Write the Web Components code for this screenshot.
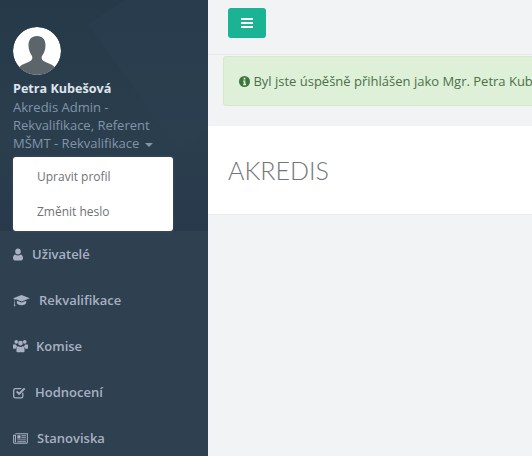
<!DOCTYPE html>
<html lang="cs">
<head>
<meta charset="utf-8">
<title>Akredis</title>
<style>
    html, body { margin: 0; height: 100%; overflow: hidden; }
    body { font-family: "Open Sans", "Liberation Sans", sans-serif; font-size: 13px; background: #f2f3f5; }
</style>
</head>
<body>
<app-shell>
    <side-bar slot="side">
        <nav-item label="Uživatelé" gap="32"><svg viewBox="0 0 11 13" width="10" height="13"><path fill="currentColor" d="M5.500 0C7.300 0 8.600 1.400 8.600 3.300S7.300 6.600 5.500 6.600 2.400 5.200 2.400 3.300 3.700 0 5.500 0zM2.600 6.500c.7.700 1.700 1.100 2.900 1.100s2.200-.4 2.900-1.100c1.800.2 2.600 1.900 2.600 4.200 0 1.400-.8 2.300-2 2.300H2c-1.200 0-2-.9-2-2.300 0-2.300.8-4 2.600-4.200z"/></svg></nav-item>
        <nav-item label="Rekvalifikace" gap="39"><svg viewBox="0 0 18 14" width="17" height="13"><path fill="currentColor" d="M9 1l9 3.500-9 3.500-6-2.300-1.200.6v2.500c.3.200.5.400.5.700l-.4.500.5 3.300H.8l.5-3.300-.4-.5c0-.3.2-.5.500-.7V5.400L0 4.500zM4 7.200l5 2 5-2v2.600c0 1.300-2.300 2.400-5 2.400s-5-1.100-5-2.400z"/></svg></nav-item>
        <nav-item label="Komise" gap="36"><svg viewBox="0 0 16 14" width="15" height="14"><path fill="currentColor" d="M3.500 0.500a2 2 0 1 1 0 4 2 2 0 0 1 0-4zM12.500 0.500a2 2 0 1 1 0 4 2 2 0 0 1 0-4zM8 1.500a2.500 2.500 0 1 1 0 5 2.500 2.500 0 0 1 0-5zM0 5.500h3.200c.3 1 .9 1.800 1.300 2.200-1 .5-1.500 1.300-1.600 2.300H1c-.6 0-1-.4-1-1zM12.800 5.500H16v3.500c0 .6-.4 1-1 1h-1.900c-.1-1-.6-1.800-1.600-2.300.4-.4 1-1.200 1.300-2.200zM5.500 7.200c.7.500 1.600.8 2.500.8s1.800-.3 2.500-.8c1.300.3 1.800 1.500 1.800 3.300v2c0 .7-.5 1.200-1.200 1.200H4.900c-.7 0-1.200-.5-1.200-1.200v-2c0-1.800.5-3 1.800-3.300z"/></svg></nav-item>
        <nav-item label="Hodnocení" gap="35"><svg viewBox="0 0 13 13" width="13" height="13"><path fill="none" stroke="currentColor" stroke-width="1.300" d="M9.800 6.800v3.400c0 1-.6 1.600-1.600 1.600H2.300c-1 0-1.600-.6-1.600-1.600V4.300c0-1 .6-1.600 1.600-1.600h6"/><path fill="currentColor" d="M3 6l1.300-1.300 1.800 1.800L11 1.700l1.400 1.400L6.100 9.300z"/></svg></nav-item>
        <nav-item label="Stanoviska" gap="37"><svg viewBox="0 0 16 12" width="15" height="11"><path fill="none" stroke="currentColor" stroke-width="1.100" d="M2.500.800h13v9.300c0 .7-.4 1.100-1.100 1.100H1.600C1 11.200.500 10.800.500 10.100V2.500h2v7.500"/><path fill="currentColor" d="M4.500 2.500H8v3.600H4.500zM9 2.500h5v1H9zM9 4.600h5v1H9zM4.500 7h9.500v1H4.500zM4.500 9h9.500v1H4.500z"/></svg></nav-item>
    </side-bar>
    <top-bar slot="main"></top-bar>
    <flash-alert slot="main">Byl jste úspěšně přihlášen jako Mgr. Petra Kubešová</flash-alert>
    <page-heading slot="main">AKREDIS</page-heading>
</app-shell>

<script>
class AppShell extends HTMLElement {
    constructor() {
        super();
        const shadowRoot = this.attachShadow({ mode: 'open' });
        shadowRoot.innerHTML = `
            <style>
                :host { display: flex; width: 532px; height: 456px; overflow: hidden; }
                .side { flex: 0 0 208px; }
                .main { flex: 1; min-width: 0; }
            </style>
            <div class="side"><slot name="side"></slot></div>
            <div class="main"><slot name="main"></slot></div>
        `;
    }
}
customElements.define('app-shell', AppShell);

class SideBar extends HTMLElement {
    constructor() {
        super();
        const shadowRoot = this.attachShadow({ mode: 'open' });
        shadowRoot.innerHTML = `
            <style>
                :host { display: block; height: 456px; background: #2f4050; position: relative; }
                .head {
                    height: 231px;
                    box-sizing: border-box;
                    padding: 27px 13px 0;
                    background: linear-gradient(180deg, #263949 0%, #2b3e4e 60%, #27394a 100%);
                    position: relative;
                    overflow: hidden;
                }
                .head svg.shape { position: absolute; left: 0; top: 0; }
                .avatar { display: block; width: 48px; height: 48px; border-radius: 50%; position: relative; }
                .name { font-weight: 700; font-size: 12.600px; line-height: 18px; color: #dfe4ed; margin-top: 5px; position: relative; }
                .role { font-size: 13px; line-height: 18px; color: #8095a8; width: 150px; position: relative; }
                .caret { display: inline-block; width: 0; height: 0; margin-left: 2px; vertical-align: middle; border-top: 4px solid #8095a8; border-left: 4px solid transparent; border-right: 4px solid transparent; }
                .menu {
                    position: absolute; left: 13px; top: 157px; width: 160px; height: 74px;
                    background: #fff; border-radius: 3px; box-shadow: 0 0 3px rgba(86,96,117,.7);
                    font-size: 12px; color: #6f7274;
                }
                .menu a { display: block; height: 35px; line-height: 35px; padding-left: 24px; }
                .menu a:first-child { margin-top: 2px; }
            </style>
            <div class="head">
                <svg class="shape" width="208" height="231" viewBox="0 0 208 231"><path fill="#2d4152" opacity=".45" d="M88 24L125 0H208V130L178 150 88 24z"/></svg>
                <svg class="avatar" viewBox="0 0 48 48">
                    <defs><clipPath id="c"><circle cx="24" cy="24" r="24"/></clipPath></defs>
                    <circle cx="24" cy="24" r="24" fill="#fff"/>
                    <path clip-path="url(#c)" fill="#5c6569" d="M24 9c5.500 0 8.500 3.500 8.500 9.500 0 4-1.500 8-3.500 10.500-.6 1.500-.3 3 .5 4 2.500 2.500 9 3.500 12 7L44 48H4l2.500-8c3-3.500 9.500-4.500 12-7 .8-1 1.100-2.500.5-4-2-2.500-3.500-6.500-3.500-10.500C15.500 12.500 18.500 9 24 9z"/>
                </svg>
                <div class="name">Petra Kubešová</div>
                <div class="role">Akredis Admin - Rekvalifikace, Referent MŠMT - Rekvalifikace <span class="caret"></span></div>
            </div>
            <div class="menu"><a>Upravit profil</a><a>Změnit heslo</a></div>
            <slot></slot>
        `;
    }
}
customElements.define('side-bar', SideBar);

class NavItem extends HTMLElement {
    constructor() {
        super();
        const shadowRoot = this.attachShadow({ mode: 'open' });
        const gap = this.getAttribute('gap') || 32;
        shadowRoot.innerHTML = `
            <style>
                :host { display: block; height: 46px; color: #a7b1c2; }
                .row { display: flex; align-items: center; height: 46px; padding-left: 13px; }
                .ico { flex: 0 0 ${gap - 13}px; display: flex; align-items: center; }
                .txt { font-weight: 600; font-size: 13px; }
            </style>
            <div class="row"><span class="ico"><slot></slot></span><span class="txt">${this.getAttribute('label')}</span></div>
        `;
    }
}
customElements.define('nav-item', NavItem);

class TopBar extends HTMLElement {
    constructor() {
        super();
        const shadowRoot = this.attachShadow({ mode: 'open' });
        shadowRoot.innerHTML = `
            <style>
                :host { display: block; height: 55px; box-sizing: border-box; padding: 8px 0 0 20px; border-bottom: 1px solid #e7eaec; }
                button { display: flex; flex-direction: column; justify-content: center; gap: 2px; align-items: center; width: 38px; height: 30px; padding: 0; background: #1ab394; border: 0; border-radius: 3px; }
                i { display: block; width: 12px; height: 2px; background: #fff; }
            </style>
            <button aria-label="Menu"><i></i><i></i><i></i></button>
        `;
    }
}
customElements.define('top-bar', TopBar);

class FlashAlert extends HTMLElement {
    constructor() {
        super();
        const shadowRoot = this.attachShadow({ mode: 'open' });
        shadowRoot.innerHTML = `
            <style>
                :host { display: block; height: 50px; box-sizing: border-box; margin: 1px -20px 0 15px; padding: 0 0 0 15px; background: #dff0d8; border: 1px solid #d6e9c6; border-radius: 3px; color: #4a7049; font-size: 13px; line-height: 48px; white-space: nowrap; overflow: hidden; }
                svg { width: 11px; height: 11px; vertical-align: -1px; color: #3c763d; }
            </style>
            <svg viewBox="0 0 12 12"><circle cx="6" cy="6" r="6" fill="currentColor"/><path fill="#dff0d8" d="M5 2h2v1.700H5zM4.500 5h2.500v3.500h.7V10H4.500V8.500h.7V6.300h-.7z"/></svg>
            <slot></slot>
        `;
    }
}
customElements.define('flash-alert', FlashAlert);

class PageHeading extends HTMLElement {
    constructor() {
        super();
        const shadowRoot = this.attachShadow({ mode: 'open' });
        shadowRoot.innerHTML = `
            <style>
                :host { display: block; height: 89px; box-sizing: border-box; margin-top: 20px; padding: 0 0 0 20px; background: #fff; border-bottom: 1px solid #e7eaec; }
                h2 { margin: 0; font: 300 25px/88px Lato, "Open Sans", sans-serif; color: #737678; }
            </style>
            <h2><slot></slot></h2>
        `;
    }
}
customElements.define('page-heading', PageHeading);
</script>
</body>
</html>
